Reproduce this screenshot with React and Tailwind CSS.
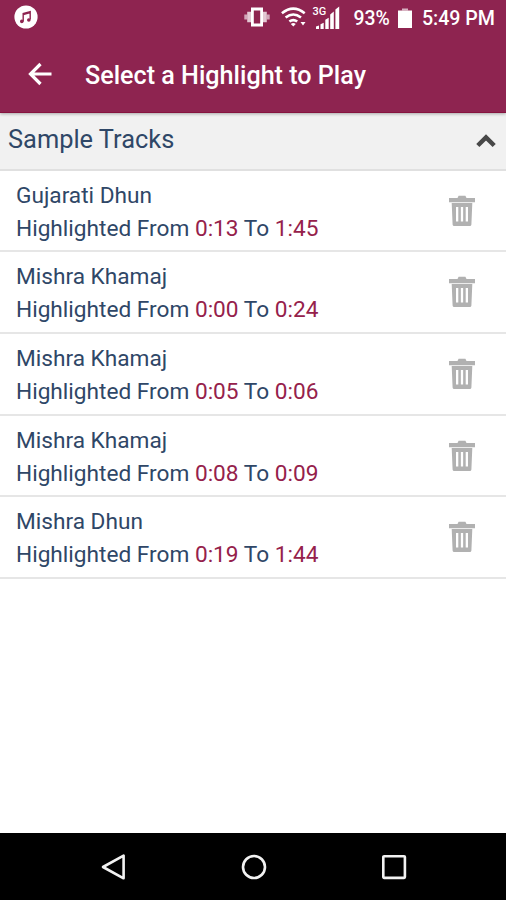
import React from 'react';

/**
 * Highlights saved for the sample tracks.
 */
const highlights = [
  { id: 1, track: 'Gujarati Dhun', from: '0:13', to: '1:45' },
  { id: 2, track: 'Mishra Khamaj', from: '0:00', to: '0:24' },
  { id: 3, track: 'Mishra Khamaj', from: '0:05', to: '0:06' },
  { id: 4, track: 'Mishra Khamaj', from: '0:08', to: '0:09' },
  { id: 5, track: 'Mishra Dhun', from: '0:19', to: '1:44' },
];

const MusicIcon = () => (
  <svg className="h-6 w-6" viewBox="0 0 24 24">
    <circle cx="12" cy="12" r="11.6" fill="#fff" />
    <path d="M9.2 16.4V8.6l7-2v8M9.2 9.6l7-2" fill="none" stroke="#8e2450" strokeWidth="1.4" />
    <circle cx="7.8" cy="16.4" r="1.8" fill="#8e2450" />
    <circle cx="14.8" cy="15" r="1.8" fill="#8e2450" />
  </svg>
);

const VibrateIcon = () => (
  <svg className="h-5 w-[26px]" viewBox="0 0 26 20" fill="#fff">
    <path d="M7 .5h12v19H7zM9.8 3.5v13h6.4v-13z" fillRule="evenodd" />
    <path d="M3.2 4.8h3.8v10.4H3.2zM19 4.8h3.8v10.4H19z" opacity=".75" />
    <path d="M.3 7.5h2.9v5H.3zM22.8 7.5h2.9v5h-2.9z" opacity=".6" />
  </svg>
);

const WifiIcon = () => (
  <svg className="h-5 w-[25px]" viewBox="0 0 25 20">
    <g fill="none" stroke="#fff" strokeWidth="2.6">
      <path d="M.9 6.2Q12.3-2.9 23.7 6.2" />
      <path d="M4.6 10.5Q12.3 4.5 20 10.5" />
      <path d="M8.4 14.6Q12.3 11.5 16.2 14.6" />
    </g>
    <path d="M9.8 16.9Q12.3 15.2 14.8 16.9L12.3 19.6zM19.5 15h5l-2.5 3.4z" fill="#fff" />
  </svg>
);

const SignalIcon = () => (
  <div className="relative h-[23px] w-[26px]">
    <svg className="h-full w-full" viewBox="0 0 26 23" fill="#fff">
      <path d="M2 20.5L5 19.5V23H2zM6.5 18.2l3.2-1.5V23H6.5zM11.3 13.7l3.4-2V23h-3.4zM16.2 8.5l3.6-3V23h-3.6zM21.4 3.5L25.2.5V23h-3.8z" />
    </svg>
    <span className="absolute top-0 -left-px text-[11px] leading-[11px] font-medium">3G</span>
  </div>
);

const BatteryIcon = () => (
  <svg className="h-5 w-[14px]" viewBox="0 0 14 20" fill="#fff">
    <path d="M0 2.5h14V20H0z" />
    <path d="M4 .5h6v2H4z" opacity=".65" />
  </svg>
);

const TrashIcon = () => (
  <svg className="h-8 w-7" viewBox="0 0 28 32" fill="#b1b1b1">
    <path d="M1 3h8.500L10.600.8h6.800L18.500 3H27v4.200H1z" />
    <path
      fillRule="evenodd"
      d="M3.7 8h20.6l-.9 21.5q-.1 1.5-1.6 1.500H6.2q-1.500 0-1.600-1.500zM8 12v14.500h2.300V12zM12.850 12v14.500h2.300V12zM17.700 12v14.500H20V12z"
    />
  </svg>
);

/**
 * System status bar at the top of the screen.
 */
const StatusBar = () => (
  <div className="flex h-9 items-center justify-between pl-[14px] pr-[11px] text-white">
    <div className="-mt-[2px]">
      <MusicIcon />
    </div>
    <div className="flex items-center">
      <div className="-mt-px">
        <VibrateIcon />
      </div>
      <div className="-mt-px ml-[11px]">
        <WifiIcon />
      </div>
      <div className="-mt-px ml-[8px]">
        <SignalIcon />
      </div>
      <span className="mt-[2px] ml-[14px] text-[19.4px] font-medium">93%</span>
      <div className="ml-[8px]">
        <BatteryIcon />
      </div>
      <span className="mt-[2px] ml-[10px] text-[19.6px] font-medium">5:49 PM</span>
    </div>
  </div>
);

/**
 * One saved highlight with its time range.
 */
const HighlightRow = ({ highlight }) => (
  <li className="flex h-[81.7px] items-center justify-between border-b-2 border-[#e6e6e6] bg-white pl-4 pr-[30px] pt-[2.6px]">
    <div className="text-[22.65px] leading-[33px] text-[#2f4767]">
      <p>{highlight.track}</p>
      <p>
        Highlighted From <span className="text-[#95214b]">{highlight.from}</span> To{' '}
        <span className="text-[#95214b]">{highlight.to}</span>
      </p>
    </div>
    <button className="-mt-[2px]" aria-label="Delete highlight">
      <TrashIcon />
    </button>
  </li>
);

const NavigationBar = () => (
  <nav className="flex h-[67px] items-center justify-between bg-black pl-[100px] pr-[98px]">
    <svg className="h-7 w-7" viewBox="0 0 28 28" fill="none" stroke="#f2f2f2" strokeWidth="2.6">
      <path d="M23.6 2.7v22.6L3 14z" strokeLinejoin="round" />
    </svg>
    <svg className="h-7 w-7" viewBox="0 0 28 28" fill="none" stroke="#f2f2f2" strokeWidth="2.6">
      <circle cx="14" cy="14" r="11" />
    </svg>
    <svg className="h-7 w-7" viewBox="0 0 28 28" fill="none" stroke="#f2f2f2" strokeWidth="2.6">
      <rect x="3.3" y="3.3" width="21.6" height="21.6" rx=".8" />
    </svg>
  </nav>
);

const App = () => (
  <div className="flex h-[900px] w-[506px] flex-col overflow-hidden bg-white font-['Roboto',sans-serif]">
    <header className="z-10 h-[113px] shrink-0 border-b border-[#86133f] bg-[#8e2450] shadow-[0_1px_3px_rgba(0,0,0,0.3)]">
      <StatusBar />
      <div className="flex h-[76px] items-center pl-[28px]">
        <svg className="h-6 w-6" viewBox="0 0 24 24" fill="none" stroke="#fff" strokeWidth="3.2">
          <path d="M23.5 12H2.8M12.5 2L2.5 12L12.5 22" />
        </svg>
        <h1 className="ml-[33px] mt-[3px] text-[25.15px] font-medium text-white">Select a Highlight to Play</h1>
      </div>
    </header>

    <main className="grow">
      <section>
        <div className="flex h-[57.5px] items-center justify-between border-b-2 border-[#e0e0e0] bg-[#f1f1f1] pl-2 pr-[10px]">
          <h2 className="-mt-[3px] text-[25.4px] text-[#2f4767]">Sample Tracks</h2>
          <svg className="h-[14px] w-5" viewBox="0 0 20 14" fill="none" stroke="#484848" strokeWidth="4.5">
            <path d="M1.8 11.5L10 3.5L18.2 11.5" />
          </svg>
        </div>
        <ul>
          {highlights.map((highlight) => (
            <HighlightRow key={highlight.id} highlight={highlight} />
          ))}
        </ul>
      </section>
    </main>

    <NavigationBar />
  </div>
);

export default App;
